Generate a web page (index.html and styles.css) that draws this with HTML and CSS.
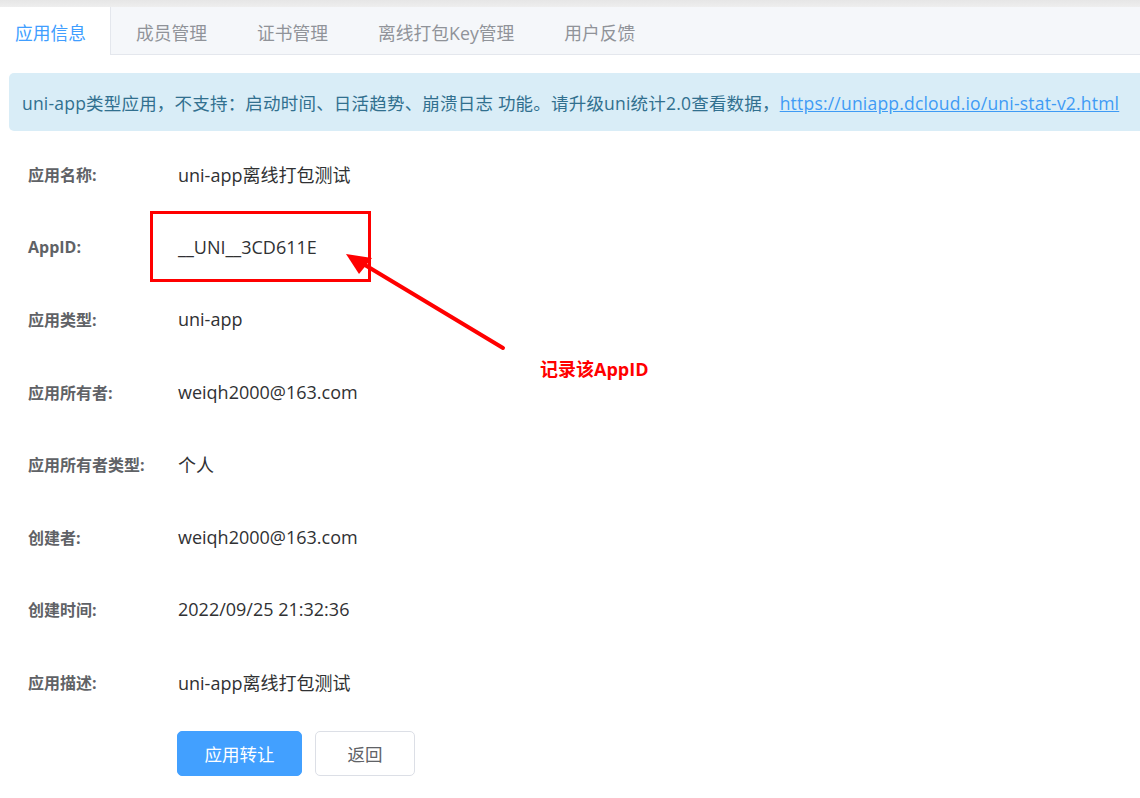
FILE: index.html
```html
<!DOCTYPE html>
<html lang="zh-CN">
<head>
<meta charset="utf-8">
<title>应用信息</title>
<link rel="stylesheet" href="styles.css">
</head>
<body>
<div class="page">
  <div class="topstrip"></div>
  <div class="tabs">
    <div class="tab first active">应用信息</div>
    <div class="tab">成员管理</div>
    <div class="tab">证书管理</div>
    <div class="tab">离线打包Key管理</div>
    <div class="tab">用户反馈</div>
  </div>
  <div class="alert">uni-app类型应用，不支持：启动时间、日活趋势、崩溃日志 功能。请升级uni统计2.0查看数据，<a class="alert-link" href="#">https://uniapp.dcloud.io/uni-stat-v2.html</a></div>
  <div class="form">
    <div class="label">应用名称:</div><div class="value">uni-app离线打包测试</div>
    <div class="label">AppID:</div><div class="value">__UNI__3CD611E</div>
    <div class="label">应用类型:</div><div class="value">uni-app</div>
    <div class="label">应用所有者:</div><div class="value">weiqh2000@163.com</div>
    <div class="label">应用所有者类型:</div><div class="value">个人</div>
    <div class="label">创建者:</div><div class="value">weiqh2000@163.com</div>
    <div class="label">创建时间:</div><div class="value">2022/09/25 21:32:36</div>
    <div class="label">应用描述:</div><div class="value">uni-app离线打包测试</div>
  </div>
  <div class="actions">
    <button class="btn btn-primary">应用转让</button>
    <button class="btn btn-default">返回</button>
  </div>

  <div class="mark-box"></div>
  <svg class="mark-arrow" width="1140" height="798" viewBox="0 0 1140 798">
    <line x1="503" y1="348" x2="360" y2="262" stroke="#ff0000" stroke-width="4" stroke-linecap="round"/>
    <polygon points="346,254 372,258 359,274" fill="#ff0000"/>
  </svg>
  <div class="mark-text">记录该AppID</div>
</div>
</body>
</html>
```

FILE: styles.css
```css
html, body {
  margin: 0;
  padding: 0;
  background: #ffffff;
  overflow: hidden;
}

.page {
  position: relative;
  width: 1140px;
  height: 798px;
  overflow: hidden;
  font-family: "Open Sans", "Noto Sans CJK SC", sans-serif;
}

.topstrip {
  height: 7px;
  background: linear-gradient(#e6e6e6, #eeeeee);
}

.tabs {
  display: flex;
  height: 47px;
  background: #f5f7fa;
  border-bottom: 1px solid #e4e7ed;
}

.tab {
  padding: 3px 25px 0;
  line-height: 46px;
  font-size: 17.75px;
  color: #909399;
  white-space: nowrap;
}

.tab.first {
  padding-left: 15px;
  padding-right: 24px;
}

.tab.active {
  background: #ffffff;
  color: #409eff;
  border-right: 1px solid #e4e7ed;
  height: 45px;
}

.alert {
  margin: 18px -30px 0 9px;
  height: 58px;
  line-height: 60px;
  padding-left: 13px;
  background: #d9edf7;
  border-radius: 5px;
  color: #31708f;
  font-size: 17.5px;
  letter-spacing: 0.2px;
  white-space: nowrap;
}

.alert-link {
  color: #3f9bf5;
  text-decoration: underline;
}

.form {
  display: grid;
  grid-template-columns: 178px 1fr;
  grid-auto-rows: 72.5px;
  margin-top: 7px;
  align-items: center;
}

.label {
  padding-left: 28px;
  font-size: 16px;
  font-weight: bold;
  color: #606266;
  white-space: nowrap;
}

.value {
  font-size: 18px;
  color: #303133;
  white-space: nowrap;
}

.actions {
  display: flex;
  gap: 13px;
  margin: 13px 0 0 177px;
}

.btn {
  height: 45px;
  border-radius: 5px;
  font-family: "Open Sans", "Noto Sans CJK SC", sans-serif;
  font-size: 17.5px;
  cursor: pointer;
}

.btn-primary {
  width: 125px;
  background: #42a0ff;
  border: 1px solid #42a0ff;
  color: #ffffff;
}

.btn-default {
  width: 100px;
  background: #ffffff;
  border: 1px solid #dcdfe6;
  color: #606266;
}

.mark-box {
  position: absolute;
  left: 150px;
  top: 211px;
  width: 215px;
  height: 65px;
  border: 3.5px solid #ff0000;
}

.mark-arrow {
  position: absolute;
  left: 0;
  top: 0;
  pointer-events: none;
}

.mark-text {
  position: absolute;
  left: 540px;
  top: 355px;
  font-size: 18px;
  font-weight: bold;
  color: #ff0000;
  white-space: nowrap;
}
```
